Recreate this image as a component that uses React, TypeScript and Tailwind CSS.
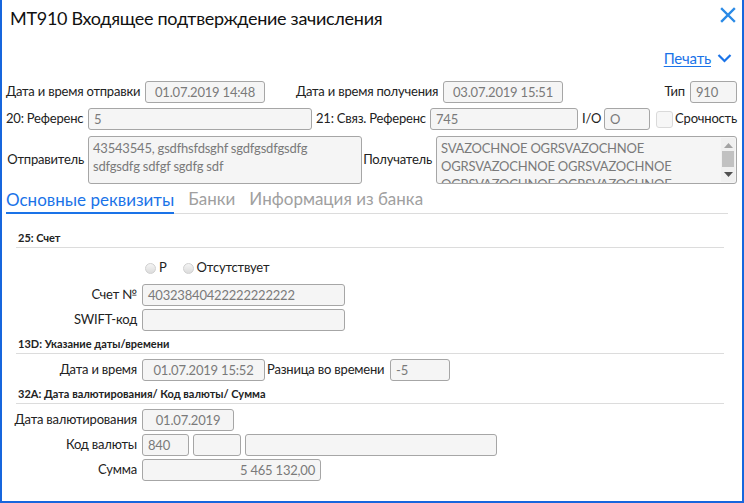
import React from "react";

type FieldProps = {
  className: string;
  value?: string;
  align?: "left" | "center" | "right";
};

function Field({ className, value = "", align = "left" }: FieldProps) {
  const alignClass =
    align === "center" ? "text-center" : align === "right" ? "text-right" : "text-left";
  return (
    <div
      className={`h-[22px] shrink-0 rounded-[3px] border border-[#a6a6a6] bg-[#f5f5f5] px-[5px] text-[13px] leading-[20px] text-[#7a7a7a] whitespace-nowrap overflow-hidden ${alignClass} ${className}`}
    >
      {value}
    </div>
  );
}

function SectionHeader({ title, className }: { title: string; className: string }) {
  return (
    <div
      className={`ml-[14px] mr-[18px] h-[19px] border-b border-[#dcdcdc] pl-[2px] text-[11px] font-bold leading-[18px] tracking-normal text-[#222] ${className}`}
    >
      {title}
    </div>
  );
}

function FormRow({ label, className, children }: { label: string; className: string; children: React.ReactNode }) {
  return (
    <div className={`flex items-center ${className}`}>
      <span className="w-[140px] shrink-0 whitespace-nowrap pr-[5px] text-right text-[13px] text-[#222]">{label}</span>
      {children}
    </div>
  );
}

function Radio({ label }: { label: string }) {
  return (
    <span className="flex items-center gap-[3px]">
      <span className="h-[11px] w-[11px] rounded-full border border-[#d0d0d0] bg-gradient-to-b from-[#f4f4f4] to-[#dcdcdc]" />
      <span className="text-[13px] text-[#222]">{label}</span>
    </span>
  );
}

export default function App() {
  return (
    <div className="relative h-[503px] w-[744px] overflow-hidden border-x-2 border-b-2 border-[#1766dd] bg-white font-['Lato',sans-serif] tracking-[-0.2px] text-[#222]">
      {/* header */}
      <div className="flex items-start justify-between pt-[4px]">
        <h1 className="whitespace-nowrap pl-[8px] text-[18px] leading-[28px] tracking-[-0.3px] text-[#111]">
          MT910 Входящее подтверждение зачисления
        </h1>
        <svg className="mr-[6px] mt-[3px]" width="16" height="16" viewBox="0 0 16 16" fill="none">
          <path d="M2 2L14 14M14 2L2 14" stroke="#2a8ae6" strokeWidth="2.4" strokeLinecap="square" />
        </svg>
      </div>

      <div className="mt-[16px] flex h-[20px] items-center justify-end pr-[10px]">
        <span className="text-[15px] leading-[20px] text-[#1a73e8] underline underline-offset-2">Печать</span>
        <svg className="ml-[6px]" width="15" height="10" viewBox="0 0 15 10" fill="none">
          <path d="M1.5 2L7.5 8L13.5 2" stroke="#1a73e8" strokeWidth="2.2" />
        </svg>
      </div>

      {/* row 1 */}
      <div className="mt-[13px] flex items-center whitespace-nowrap pl-[4px] pr-[5px] text-[13px]">
        <span className="w-[139px] shrink-0">Дата и время отправки</span>
        <Field className="w-[120px]" value="01.07.2019 14:48" align="center" />
        <span className="ml-[31px] w-[147px] shrink-0">Дата и время получения</span>
        <Field className="w-[120px]" value="03.07.2019 15:51" align="center" />
        <span className="ml-auto pr-[5px]">Тип</span>
        <Field className="w-[47px]" value="910" />
      </div>

      {/* row 2 */}
      <div className="mt-[5px] flex items-center whitespace-nowrap pl-[4px] pr-[5px] text-[13px]">
        <span className="w-[82px] shrink-0">20: Референс</span>
        <Field className="w-[224px]" value="5" />
        <span className="ml-[4px] w-[114px] shrink-0">21: Связ. Референс</span>
        <Field className="w-[148px]" value="745" />
        <span className="ml-[4px] w-[22px] shrink-0">I/O</span>
        <Field className="w-[46px]" value="O" />
        <span className="ml-[6px] h-[17px] w-[17px] shrink-0 rounded-[3px] border border-[#dadada] bg-[#f7f7f7]" />
        <span className="ml-auto">Срочность</span>
      </div>

      {/* row 3 */}
      <div className="mt-[6px] flex items-center whitespace-nowrap pl-[4px] pr-[5px] text-[13px]">
        <span className="w-[82px] shrink-0 pr-[4px] text-right">Отправитель</span>
        <div className="h-[48px] w-[274px] shrink-0 overflow-hidden whitespace-normal rounded-[3px] border border-[#a6a6a6] bg-[#f5f5f5] px-[4px] pt-[2px] text-[13px] leading-[18px] text-[#7a7a7a]">
          43543545, gsdfhsfdsghf sgdfgsdfgsdfg sdfgsdfg sdfgf sgdfg sdf
        </div>
        <span className="w-[74px] shrink-0 pr-[4px] text-right">Получатель</span>
        <div className="flex h-[48px] flex-1 overflow-hidden rounded-[3px] border border-[#a6a6a6] bg-[#f5f5f5] text-[13px] leading-[18px] text-[#7a7a7a]">
          <div className="overflow-hidden pl-[4px] pt-[2px]">
            <div>SVAZOCHNOE OGRSVAZOCHNOE</div>
            <div>OGRSVAZOCHNOE OGRSVAZOCHNOE</div>
            <div>OGRSVAZOCHNOE OGRSVAZOCHNOE</div>
          </div>
          <div className="my-[1px] ml-auto mr-[1px] flex w-[14px] flex-col items-center bg-[#f0f0f0]">
            <svg className="mt-[5px]" width="9" height="5" viewBox="0 0 9 5">
              <path d="M0 5L4.5 0L9 5Z" fill="#a3a3a3" />
            </svg>
            <div className="mt-[3px] h-[16px] w-[12px] bg-[#c1c1c1]" />
            <svg className="mb-[5px] mt-auto" width="9" height="5" viewBox="0 0 9 5">
              <path d="M0 0L4.5 5L9 0Z" fill="#505050" />
            </svg>
          </div>
        </div>
      </div>

      {/* tabs */}
      <div className="ml-[4px] mr-[14px] mt-[4px] flex h-[26px] items-end gap-[14px] whitespace-nowrap border-b border-[#dcdcdc] text-[17px] leading-[22px] tracking-normal">
        <span className="-mb-px border-b-2 border-[#1a73e8] pb-[1px] text-[#1a73e8]">Основные реквизиты</span>
        <span className="pb-[3px] text-[#a0a0a0]">Банки</span>
        <span className="pb-[3px] text-[#a0a0a0]">Информация из банка</span>
      </div>

      {/* 25 */}
      <SectionHeader title="25: Счет" className="mt-[15px]" />
      <div className="mt-[10px] flex h-[20px] items-center gap-[16px] pl-[143px]">
        <Radio label="Р" />
        <Radio label="Отсутствует" />
      </div>
      <FormRow label="Счет №" className="mt-[6px]">
        <Field className="w-[203px]" value="40323840422222222222" />
      </FormRow>
      <FormRow label="SWIFT-код" className="mt-[3px]">
        <Field className="w-[203px]" />
      </FormRow>

      {/* 13D */}
      <SectionHeader title="13D: Указание даты/времени" className="mt-[4px]" />
      <FormRow label="Дата и время" className="mt-[5px]">
        <Field className="w-[123px]" value="01.07.2019 15:52" align="center" />
        <span className="ml-[2px] w-[123px] shrink-0 whitespace-nowrap text-[13px]">Разница во времени</span>
        <Field className="w-[60px]" value="-5" />
      </FormRow>

      {/* 32A */}
      <SectionHeader title="32A: Дата валютирования/ Код валюты/ Сумма" className="mt-[4px]" />
      <FormRow label="Дата валютирования" className="mt-[5px]">
        <Field className="w-[92px]" value="01.07.2019" align="center" />
      </FormRow>
      <FormRow label="Код валюты" className="mt-[3px]">
        <Field className="w-[47px]" value="840" />
        <Field className="ml-[4px] w-[48px]" />
        <Field className="ml-[4px] w-[252px]" />
      </FormRow>
      <FormRow label="Сумма" className="mt-[3px]">
        <Field className="w-[179px]" value="5 465 132,00" align="right" />
      </FormRow>
    </div>
  );
}
